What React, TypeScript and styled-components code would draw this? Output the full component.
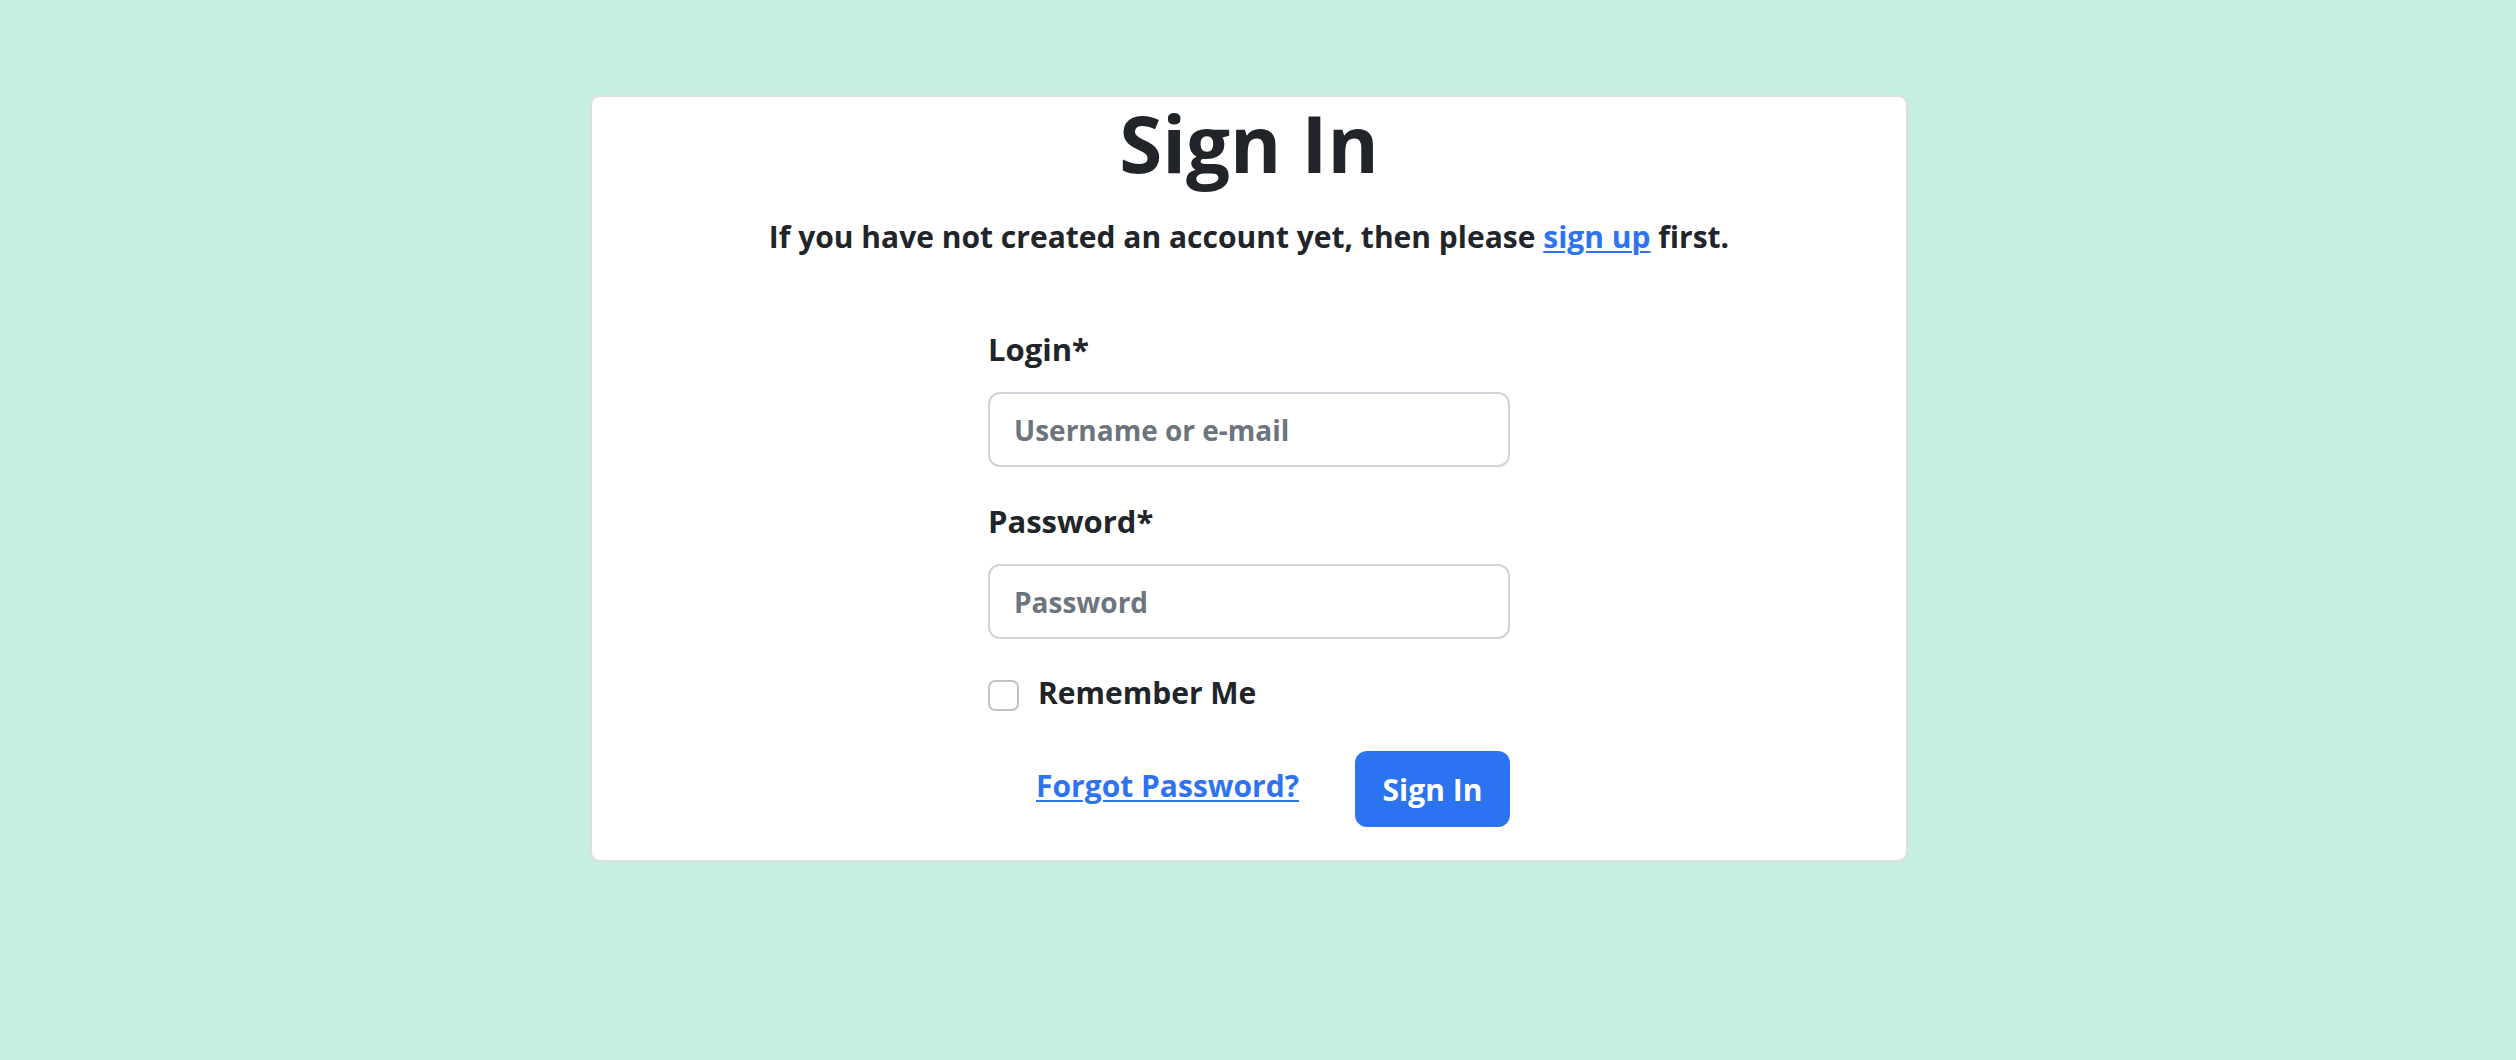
import React from "react";
import styled, { createGlobalStyle } from "styled-components";

const Global = createGlobalStyle`
  html, body {
    margin: 0;
    padding: 0;
    background: #c4efe1;
  }
  body {
    font-family: "Open Sans", Lato, sans-serif;
    color: #212529;
  }
  * { box-sizing: border-box; }
`;

const Page = styled.div`
  min-height: 1060px;
  padding: 95px 0 0 590px;
`;

const Card = styled.div`
  width: 1318px;
  background: #ffffff;
  border: 2px solid #dedede;
  border-radius: 10px;
  padding: 0 0 33px;
  display: flex;
  flex-direction: column;
  align-items: center;
`;

const Title = styled.h1`
  margin: 0;
  font-size: 78px;
  line-height: 93px;
  font-weight: 700;
  text-align: center;
`;

const Subtitle = styled.p`
  margin: 29px 0 0;
  font-size: 30px;
  line-height: 36px;
  font-weight: 700;
  text-align: center;
`;

const Link = styled.a`
  color: #2e73f2;
  text-decoration: underline;
  text-decoration-thickness: 2px;
  text-underline-offset: 3px;
  cursor: pointer;
`;

const Form = styled.form`
  width: 522px;
  margin-top: 76px;
  display: flex;
  flex-direction: column;
`;

const Label = styled.label<{ $gap?: number }>`
  display: block;
  margin-top: ${(p) => p.$gap ?? 0}px;
  font-size: 31px;
  line-height: 36px;
  font-weight: 700;
`;

const Input = styled.input`
  margin-top: 25px;
  width: 100%;
  height: 75px;
  border: 2px solid #ced4da;
  border-radius: 12px;
  padding: 0 24px;
  font-family: inherit;
  font-size: 28px;
  font-weight: 700;
  color: #212529;
  outline: none;
  &::placeholder {
    color: #6c757d;
    opacity: 1;
  }
`;

const CheckRow = styled.div`
  margin-top: 36px;
  display: flex;
  align-items: flex-start;
  gap: 19px;
`;

const Box = styled.span`
  margin-top: 5px;
  width: 31px;
  height: 31px;
  border: 2px solid #c2c2c2;
  border-radius: 7px;
  background: #fff;
  flex: none;
`;

const CheckText = styled.span`
  font-size: 30px;
  line-height: 36px;
  font-weight: 700;
`;

const Actions = styled.div`
  margin-top: 40px;
  display: flex;
  justify-content: flex-end;
  align-items: center;
  gap: 56px;
`;

const ForgotLink = styled(Link)`
  font-size: 30px;
  line-height: 36px;
  font-weight: 700;
  margin-bottom: 6px;
`;

const Button = styled.button`
  width: 155px;
  height: 76px;
  border: none;
  border-radius: 12px;
  background: #2c73f2;
  color: #ffffff;
  font-family: inherit;
  font-size: 30px;
  font-weight: 700;
  cursor: pointer;
`;

export default function App() {
  return (
    <>
      <Global />
      <Page>
        <Card>
          <Title>Sign In</Title>
          <Subtitle>
            If you have not created an account yet, then please <Link>sign up</Link> first.
          </Subtitle>
          <Form onSubmit={(e) => e.preventDefault()}>
            <Label>Login*</Label>
            <Input placeholder="Username or e-mail" />
            <Label $gap={36}>Password*</Label>
            <Input type="password" placeholder="Password" />
            <CheckRow>
              <Box />
              <CheckText>Remember Me</CheckText>
            </CheckRow>
            <Actions>
              <ForgotLink>Forgot Password?</ForgotLink>
              <Button type="submit">Sign In</Button>
            </Actions>
          </Form>
        </Card>
      </Page>
    </>
  );
}
